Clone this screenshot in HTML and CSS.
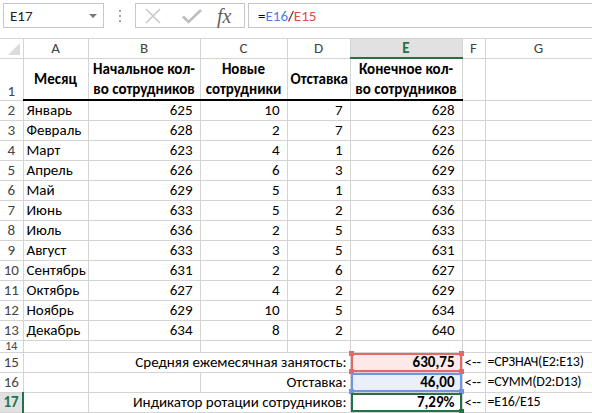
FILE: index.html
```html
<!DOCTYPE html>
<html lang="ru">

<head>
    <meta charset="UTF-8">
    <title>Индикатор ротации сотрудников</title>
    <link rel="stylesheet" href="styles.css">
</head>

<body>
    <div class="formula-bar">
        <div class="name-box">
            <span>E17</span>
            <span class="nb-arrow"></span>
        </div>
        <div class="grip"><i></i><i></i><i></i></div>
        <div class="fx-buttons">
            <svg class="icon-x" width="16" height="16" viewBox="0 0 16 16">
                <path d="M1 1 L15 15 M15 1 L1 15" stroke="#c8c8c8" stroke-width="1.6" fill="none"/>
            </svg>
            <svg class="icon-check" width="20" height="16" viewBox="0 0 20 16">
                <path d="M1 8.5 L6.5 14 L19 2" stroke="#bdbdbd" stroke-width="2.6" fill="none"/>
            </svg>
            <span class="fx">fx</span>
        </div>
        <div class="formula">=<span class="ref-blue">E16</span>/<span class="ref-red">E15</span></div>
    </div>

    <table class="sheet">
        <colgroup>
            <col style="width:23px">
            <col style="width:65px">
            <col style="width:112px">
            <col style="width:87px">
            <col style="width:63px">
            <col style="width:112px">
            <col style="width:23px">
            <col style="width:107px">
        </colgroup>
        <tr class="col-head">
            <th class="corner"><span class="tri"></span></th>
            <th>A</th><th>B</th><th>C</th><th>D</th><th class="active">E</th><th>F</th><th>G</th>
        </tr>
        <tr class="title-row">
            <th class="row-head">1</th>
            <td class="title">Месяц</td>
            <td class="title">Начальное кол-во сотрудников</td>
            <td class="title">Новые сотрудники</td>
            <td class="title">Отставка</td>
            <td class="title">Конечное кол-во сотрудников</td>
            <td></td><td></td>
        </tr>
        <tr><th class="row-head">2</th><td>Январь</td><td class="num">625</td><td class="num">10</td><td class="num">7</td><td class="num">628</td><td></td><td></td></tr>
        <tr><th class="row-head">3</th><td>Февраль</td><td class="num">628</td><td class="num">2</td><td class="num">7</td><td class="num">623</td><td></td><td></td></tr>
        <tr><th class="row-head">4</th><td>Март</td><td class="num">623</td><td class="num">4</td><td class="num">1</td><td class="num">626</td><td></td><td></td></tr>
        <tr><th class="row-head">5</th><td>Апрель</td><td class="num">626</td><td class="num">6</td><td class="num">3</td><td class="num">629</td><td></td><td></td></tr>
        <tr><th class="row-head">6</th><td>Май</td><td class="num">629</td><td class="num">5</td><td class="num">1</td><td class="num">633</td><td></td><td></td></tr>
        <tr><th class="row-head">7</th><td>Июнь</td><td class="num">633</td><td class="num">5</td><td class="num">2</td><td class="num">636</td><td></td><td></td></tr>
        <tr><th class="row-head">8</th><td>Июль</td><td class="num">636</td><td class="num">2</td><td class="num">5</td><td class="num">633</td><td></td><td></td></tr>
        <tr><th class="row-head">9</th><td>Август</td><td class="num">633</td><td class="num">3</td><td class="num">5</td><td class="num">631</td><td></td><td></td></tr>
        <tr><th class="row-head">10</th><td>Сентябрь</td><td class="num">631</td><td class="num">2</td><td class="num">6</td><td class="num">627</td><td></td><td></td></tr>
        <tr><th class="row-head">11</th><td>Октябрь</td><td class="num">627</td><td class="num">4</td><td class="num">2</td><td class="num">629</td><td></td><td></td></tr>
        <tr><th class="row-head">12</th><td>Ноябрь</td><td class="num">629</td><td class="num">10</td><td class="num">5</td><td class="num">634</td><td></td><td></td></tr>
        <tr><th class="row-head">13</th><td>Декабрь</td><td class="num">634</td><td class="num">8</td><td class="num">2</td><td class="num">640</td><td></td><td></td></tr>
        <tr class="short-row"><th class="row-head">14</th><td></td><td></td><td></td><td></td><td></td><td></td><td></td></tr>
        <tr>
            <th class="row-head">15</th><td></td>
            <td class="label" colspan="3">Средняя ежемесячная занятость:</td>
            <td class="num strong ref-red-cell">630,75<i class="h tl"></i><i class="h tr"></i><i class="h bl"></i><i class="h br"></i></td>
            <td class="arrow">&lt;--</td><td class="note">=СРЗНАЧ(E2:E13)</td>
        </tr>
        <tr>
            <th class="row-head">16</th><td></td><td></td>
            <td class="label" colspan="2">Отставка:</td>
            <td class="num strong ref-blue-cell">46,00<i class="h bl"></i><i class="h br"></i></td>
            <td class="arrow">&lt;--</td><td class="note">=СУММ(D2:D13)</td>
        </tr>
        <tr>
            <th class="row-head active">17</th><td></td>
            <td class="label" colspan="3">Индикатор ротации сотрудников:</td>
            <td class="num strong selected">7,29%<i class="h br"></i></td>
            <td class="arrow">&lt;--</td><td class="note">=E16/E15</td>
        </tr>
        <tr><th class="row-head"></th><td></td><td></td><td></td><td></td><td></td><td></td><td></td></tr>
    </table>
</body>

</html>
```

FILE: styles.css
```css
:root {
    --grid-color: #d4d4d4;
    --head-text: #444;
    --excel-green: #217346;
    --ref-red: #e36868;
    --ref-red-bg: #fde9e9;
    --ref-blue: #6e95e3;
    --ref-blue-bg: #eaf0fb;
}

* {
    margin: 0;
    padding: 0;
    box-sizing: border-box;
}

body {
    font-family: Calibri, Carlito, Lato, sans-serif;
    font-size: 15px;
    color: #000;
    background: #fff;
    width: 592px;
    height: 413px;
    overflow: hidden;
}

/* formula bar */
.formula-bar {
    display: flex;
    align-items: center;
    height: 25px;
    margin: 3px 0 10px 3px;
}

.name-box {
    width: 101px;
    height: 25px;
    border: 1px solid #c6c6c6;
    display: flex;
    align-items: center;
    justify-content: space-between;
    padding: 0 6px 0 6px;
    color: #222;
}

.nb-arrow {
    width: 0;
    height: 0;
    border-left: 4px solid transparent;
    border-right: 4px solid transparent;
    border-top: 4px solid #777;
}

.grip {
    width: 31px;
    display: flex;
    flex-direction: column;
    align-items: center;
    gap: 3px;
}

.grip i {
    width: 2px;
    height: 2px;
    background: #a0a0a0;
}

.fx-buttons {
    width: 110px;
    height: 25px;
    border: 1px solid #c6c6c6;
    display: flex;
    align-items: center;
    padding-left: 9px;
}

.icon-x {
    margin-right: 21px;
}

.icon-check {
    margin-right: 15px;
}

.fx {
    font-family: "Liberation Serif", serif;
    font-style: italic;
    font-size: 20px;
    color: #5f5f5f;
    line-height: 1;
}

.formula {
    flex: 1;
    height: 25px;
    margin-left: 3px;
    border: 1px solid #c6c6c6;
    border-right: none;
    padding-left: 9px;
    display: flex;
    align-items: center;
}

.ref-blue {
    color: #4d7fe0;
}

.ref-red {
    color: #e04a4a;
}

/* sheet grid */
.sheet {
    table-layout: fixed;
    border-collapse: collapse;
    width: 592px;
}

.sheet th,
.sheet td {
    border-right: 1px solid var(--grid-color);
    border-bottom: 1px solid var(--grid-color);
    height: 20px;
    padding: 0 3px;
    white-space: nowrap;
    overflow: hidden;
    line-height: 18px;
    font-weight: normal;
}

.col-head th {
    height: 19px;
    border-top: 1px solid var(--grid-color);
    color: var(--head-text);
    text-align: center;
    font-weight: normal;
}

.col-head th.active {
    background: #e1e1e1;
    color: var(--excel-green);
    font-weight: bold;
    border-bottom: 2px solid var(--excel-green);
}

.corner {
    position: relative;
}

.tri {
    position: absolute;
    right: 3px;
    bottom: 3px;
    width: 0;
    height: 0;
    border-left: 12px solid transparent;
    border-bottom: 12px solid #dcdcdc;
}

.row-head {
    color: var(--head-text);
    text-align: center;
    padding: 0;
}

.row-head.active {
    background: #e1e1e1;
    color: var(--excel-green);
    font-weight: bold;
    border-right: 2px solid var(--excel-green);
}

.title-row th,
.title-row td {
    height: 41px;
}

.title-row .row-head {
    vertical-align: bottom;
}

.title {
    font-weight: bold !important;
    text-align: center;
    white-space: normal !important;
    line-height: 20px !important;
    border-bottom: 2px solid #000 !important;
}

.short-row th,
.short-row td {
    height: 12px;
    line-height: 10px;
    font-size: 12px;
}

.num {
    text-align: right;
    padding-right: 7px !important;
}

.strong {
    font-weight: bold !important;
}

.label {
    text-align: right;
}

.arrow {
    padding-left: 2px !important;
    overflow: visible !important;
}

.note {
    padding-left: 2px !important;
    font-size: 14px;
    letter-spacing: -0.2px;
}

/* highlighted cells */
.ref-red-cell,
.ref-blue-cell,
.selected {
    position: relative;
    overflow: visible !important;
}

.ref-red-cell {
    background: var(--ref-red-bg);
    box-shadow: inset 0 0 0 2px var(--ref-red);
}

.ref-blue-cell {
    background: var(--ref-blue-bg);
    box-shadow: inset 0 0 0 2px var(--ref-blue);
}

.selected {
    box-shadow: inset 0 0 0 2px var(--excel-green);
}

.h {
    position: absolute;
    width: 5px;
    height: 5px;
}

.ref-red-cell .h { background: var(--ref-red); }
.ref-blue-cell .h { background: var(--ref-blue); }
.selected .h { background: var(--excel-green); }

.h.tl { top: -2px; left: -2px; }
.h.tr { top: -2px; right: -2px; }
.h.bl { bottom: -2px; left: -2px; }
.h.br { bottom: -2px; right: -2px; }
```
